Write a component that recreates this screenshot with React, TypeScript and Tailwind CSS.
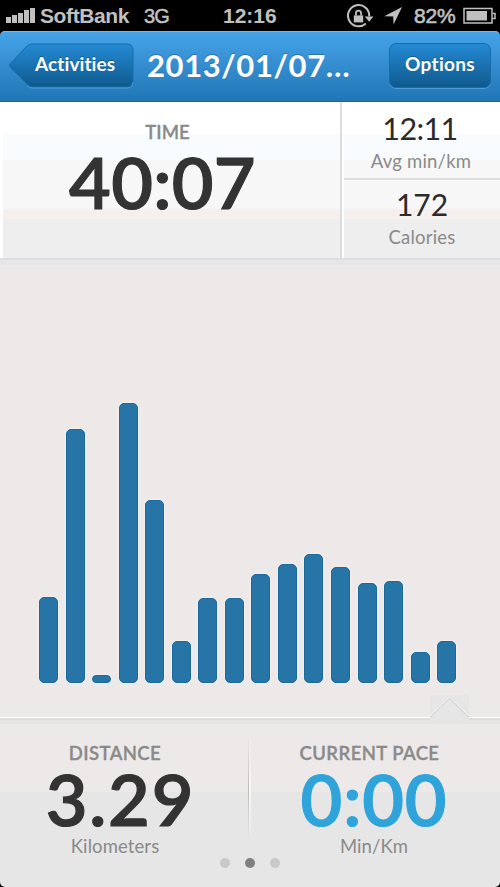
import { clsx } from "clsx";

const BARS = [85.7, 254.2, 8.2, 280, 183.2, 41.7, 84.7, 84.7, 109.2, 118.7, 129.2, 115.7, 99.7, 101.7, 30.7, 41.7];

const SIGNAL = ["h-[6px]", "h-[8px]", "h-[10px]", "h-[13px]", "h-[15px]"];

function StatusBar() {
  return (
    <header className="flex h-[31px] shrink-0 items-center bg-black font-['Liberation_Sans',sans-serif] text-[21px] font-bold leading-none text-[#c0c0c0]">
      <div className="ml-1.5 flex h-[15px] items-end gap-[1px]">
        {SIGNAL.map((h) => (
          <span key={h} className={clsx("w-[5px] bg-[#c0c0c0]", h)} />
        ))}
      </div>
      <span className="ml-[5px] w-[104px] tracking-[-0.4px]">SoftBank</span>
      <span className="w-[79px] text-[20px] font-normal tracking-[-0.8px] [-webkit-text-stroke:0.5px_#c0c0c0]">3G</span>
      <span className="w-[124px]">12:16</span>
      <svg width="28" height="26" viewBox="0 0 28 26" className="shrink-0" fill="none" stroke="#c0c0c0" strokeWidth="2">
        <path d="M18.8 20.5A10.6 10.6 0 1 1 22.2 13.5" />
        <path d="M17.8 13.5h8.6l-4.2 5.2z" fill="#c0c0c0" stroke="none" />
        <path d="M6.8 12.4h9.4v7H6.8z" fill="#c0c0c0" stroke="none" />
        <path d="M8.9 12.4v-2.2a2.6 2.6 0 0 1 5.2 0v2.2" strokeWidth="1.8" />
      </svg>
      <svg width="18" height="18" viewBox="0 0 18 18" className="ml-[9px] shrink-0" fill="#c0c0c0">
        <path d="M18 0L9.6 17.6L9.2 9.4L0.3 9.2z" />
      </svg>
      <span className="ml-3 w-[49px] font-normal tracking-[-0.2px] [-webkit-text-stroke:0.6px_#c0c0c0]">82%</span>
      <svg width="34" height="18" viewBox="0 0 34 18" className="shrink-0" fill="none" stroke="#c0c0c0" strokeWidth="1.5">
        <path d="M1 1.5h28v14.5H1z" />
        <path d="M29.5 6.5h2.5v5h-2.5" />
        <path d="M3.5 4h20.5v9.5H3.5z" fill="#c0c0c0" stroke="none" />
      </svg>
    </header>
  );
}

function NavBar() {
  return (
    <nav className="bg-black">
      <div className="flex h-[71px] items-start rounded-t-[5px] border-b border-[#1a669d] bg-linear-to-b from-[#47a4ea] to-[#2076b5] px-[9px] pt-[12px] text-white shadow-[inset_0_1px_0_#70b9ec]">
        <button className="relative h-[45px] w-[125px] pl-[26px] text-left text-[19px] font-bold leading-[41px] tracking-[0.1px]">
          <svg width="125" height="46" viewBox="0 0 125 46" className="absolute left-0 top-0">
            <defs>
              <linearGradient id="back" x1="0" y1="0" x2="0" y2="1">
                <stop offset="0" stopColor="#258ad4" />
                <stop offset="1" stopColor="#0f5a8e" />
              </linearGradient>
            </defs>
            <path d="M23 1h95q6 0 6 6v31q0 6-6 6H23q-3 0-5-3L1 24q-1-2 0-3L17 4q3-3 6-3z" fill="url(#back)" stroke="#1a6bab" />
            <path d="M18 42q2 3 5 3h95q6 0 6-6" fill="none" stroke="#4a9dd8" />
          </svg>
          <span className="relative block h-full [text-shadow:0_-1px_0_#125a8c]">Activities</span>
        </button>
        <h1 className="ml-[13px] w-[242px] whitespace-nowrap text-[31px] font-bold leading-[44px] tracking-[0.6px] [text-shadow:0_-1px_0_#2474ad]">
          2013/01/07…
        </h1>
        <button className="h-[45px] w-[102px] rounded-[7px] border border-[#1a6bab] bg-linear-to-b from-[#258ad4] to-[#0f5a8e] text-center text-[19px] font-bold leading-[40px] tracking-[0.3px] shadow-[0_1px_0_#4a9dd8] [text-shadow:0_-1px_0_#125a8c]">
          <span className="block h-full">Options</span>
        </button>
      </div>
    </nav>
  );
}

function Summary() {
  return (
    <section className="flex h-[158px] border-b-2 border-[#dcdddf] bg-[linear-gradient(to_bottom,#fff_0_32px,#f8fcff_32px_58px,#f7f7f7_58px_107px,#f5efed_107px_117px,#eee_117px)] text-center">
      <div className="w-[342px] border-l-[3px] border-r-2 border-l-white border-r-[#dcdddf] pt-[19px]">
        <p className="pr-2 text-[18.5px] font-semibold leading-[22px] text-[#8a8a8a] [-webkit-text-stroke:0.3px_#8a8a8a]">TIME</p>
        <p className="pr-[18px] text-[72px] font-semibold leading-[77px] tracking-[0.3px] text-[#333] [-webkit-text-stroke:1.2px_#333]">
          40:07
        </p>
      </div>
      <div className="flex-1 border-l-2 border-white">
        <div className="h-[78px] border-b-2 border-[#dcdddf] pr-0.5 pt-[7px]">
          <p className="pr-0.5 text-[30.5px] leading-[38px] tracking-[-0.6px] text-[#2b2b2b]">12:11</p>
          <p className="text-[18.5px] leading-[28px] tracking-[0.2px] text-[#8a8a8a]">Avg min/km</p>
        </div>
        <div className="border-t border-white pt-[4px]">
          <p className="text-[30px] leading-[38px] text-[#2b2b2b]">172</p>
          <p className="text-[18.5px] leading-[29px] tracking-[0.2px] text-[#8a8a8a]">Calories</p>
        </div>
      </div>
    </section>
  );
}

function PaceChart() {
  return (
    <section className="flex h-[457px] items-end gap-[7.55px] border-t-[5px] border-[#e7e5e5] bg-[#ede9e8] pb-[34.3px] pl-[39px]">
      {BARS.map((height, i) => (
        <div
          key={i}
          className="w-[19px] rounded-[5px] border border-[#196a9f] bg-[#2675a6] shadow-[0_0_1px_1px_#f3efed]"
          style={{ height }}
        />
      ))}
    </section>
  );
}

function Metric({ label, value, unit, accent }: { label: string; value: string; unit: string; accent?: boolean }) {
  return (
    <div className="text-center">
      <p
        className={clsx(
          "text-[18.5px] font-semibold leading-[22px] tracking-[0.4px] [-webkit-text-stroke:0.3px_#8a8a8a]",
          accent && "pr-[9px]",
        )}
      >
        {label}
      </p>
      <p
        className={clsx(
          "text-[72px] font-semibold leading-[68px]",
          accent
            ? "tracking-[0.8px] text-[#2fa4db] [-webkit-text-stroke:1.2px_#2fa4db]"
            : "pl-[11px] tracking-[1.8px] text-[#333] [-webkit-text-stroke:1.2px_#333]",
        )}
      >
        {value}
      </p>
      <p className="pt-[3px] text-[18.5px] leading-[22px] tracking-[0.1px]">{unit}</p>
    </div>
  );
}

function Footer() {
  return (
    <footer className="bg-black">
      <div className="relative h-[170px] rounded-b-[5px] border-t border-white bg-[linear-gradient(to_bottom,#dcdddf_0_2px,#e4e4e4_2px_6px,#ede9e8_6px_74px,#e6e6e6_74px)]">
        <svg width="40" height="26" viewBox="0 0 40 26" className="absolute -top-[23px] left-[430px]">
          <path d="M0 0h39v26H0z" fill="#e6e6e6" />
          <path d="M0 22L19.5 3L39 22" fill="none" stroke="#d4d4d4" strokeWidth="1.5" />
          <path d="M0 21L19.5 2L39 21" fill="none" stroke="#f8f8f8" />
        </svg>
        <div className="flex pt-[24px] text-[#8a8a8a]">
          <div className="w-[230px]">
            <Metric label="DISTANCE" value="3.29" unit="Kilometers" />
          </div>
          <div className="ml-[18px] mt-[-6px] flex h-[106px]">
            <span className="w-px bg-linear-to-b from-transparent via-[#bdbdbd] to-transparent" />
            <span className="w-[2px] bg-linear-to-b from-transparent via-[#f8f8f8] to-transparent" />
          </div>
          <div className="w-[246px]">
            <Metric label="CURRENT PACE" value="0:00" unit="Min/Km" accent />
          </div>
        </div>
        <div className="absolute left-[220px] top-[140px] flex gap-[15px]">
          <span className="size-[10px] rounded-full bg-[#c9c9c9]" />
          <span className="size-[10px] rounded-full bg-[#808080]" />
          <span className="size-[10px] rounded-full bg-[#c9c9c9]" />
        </div>
      </div>
    </footer>
  );
}

export default function App() {
  return (
    <main className="flex h-[887px] w-[500px] flex-col overflow-hidden bg-[#ede9e8] font-[Lato,sans-serif]">
      <StatusBar />
      <NavBar />
      <Summary />
      <PaceChart />
      <Footer />
    </main>
  );
}
